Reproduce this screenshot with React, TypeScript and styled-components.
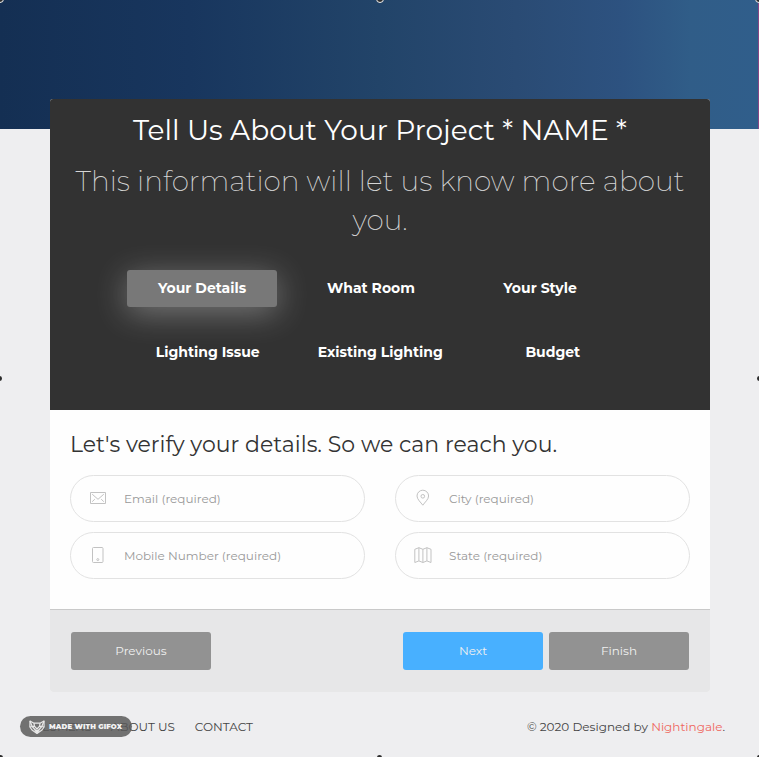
import React from "react";
import styled, { createGlobalStyle } from "styled-components";

const GlobalStyle = createGlobalStyle`
  *, *::before, *::after { box-sizing: border-box; }
  body {
    margin: 0;
    background: #eeeef0;
    font-family: Montserrat, Inter, "Open Sans", sans-serif;
    color: #333;
    overflow: hidden;
  }
`;

const Page = styled.div`
  position: relative;
  height: 757px;
  overflow: hidden;
  padding: 99px 49px 0 50px;
  background:
    linear-gradient(90deg, #142f53 0%, #18365e 25%, #224469 50%, #2a4b74 68%, #2d5280 82%, #305d88 91%, #305e8b 100%)
    0 0 / 100% 129px no-repeat #eeeef0;
`;

const Card = styled.main`
  width: 660px;
  height: 593px;
  display: flex;
  flex-direction: column;
  border-radius: 3px;
  overflow: hidden;
  background: #fefefe;
`;

const Header = styled.header`
  height: 311px;
  padding-top: 14px;
  background: #323232;
  text-align: center;
`;

const Title = styled.h1`
  margin: 0;
  font-size: 28px;
  line-height: 35px;
  font-weight: 400;
  color: #fff;
`;

const Subtitle = styled.p`
  margin: 14px 20px 0;
  font-size: 28px;
  line-height: 39px;
  font-weight: 200;
  color: #d6d6d6;
`;

const StepRow = styled.div<{ $column: number; $start: number; $top: number }>`
  display: grid;
  grid-template-columns: repeat(3, ${(p) => p.$column}px);
  justify-items: center;
  margin: ${(p) => p.$top}px 0 0 ${(p) => p.$start}px;
`;

const Step = styled.button<{ $active?: boolean }>`
  width: 150px;
  height: 37px;
  padding: 0;
  border: 0;
  border-radius: 3px;
  font: 700 14px/37px Montserrat, Inter, sans-serif;
  color: #fff;
  background: ${(p) => (p.$active ? "#787878" : "transparent")};
  box-shadow: ${(p) => (p.$active ? "0 6px 32px rgba(255, 255, 255, 0.34)" : "none")};
`;

const Body = styled.section`
  height: 199px;
  padding: 18px 20px 0;
`;

const FormHeading = styled.h2`
  margin: 0 0 13px;
  font-size: 22px;
  line-height: 34px;
  font-weight: 400;
`;

const Fields = styled.div`
  display: grid;
  grid-template-columns: 295px 295px;
  gap: 10px 30px;
`;

const Field = styled.label`
  display: flex;
  align-items: center;
  gap: 17px;
  height: 47px;
  padding: 0 18px;
  border: 1px solid #e2e2e2;
  border-radius: 24px;
`;

const Input = styled.input`
  flex: 1;
  min-width: 0;
  padding: 0;
  border: 0;
  outline: 0;
  background: transparent;
  font: 400 12px Montserrat, Inter, sans-serif;
  &::placeholder { color: #999; opacity: 1; }
`;

const Icon = styled.svg`
  flex: none;
  width: 18px;
  height: 18px;
  margin-bottom: 2px;
  fill: none;
  stroke: #c2c2c2;
  stroke-width: 1;
`;

const Actions = styled.div`
  flex: 1;
  display: flex;
  align-items: flex-start;
  gap: 6px;
  padding: 22px 21px 0;
  border-top: 1px solid #c9c9c9;
  background: #e7e7e8;
`;

const Button = styled.button<{ $primary?: boolean }>`
  width: 140px;
  height: 38px;
  padding: 0;
  border: 0;
  border-radius: 3px;
  font: 400 12px/38px Montserrat, Inter, sans-serif;
  color: #f0f0f0;
  background: ${(p) => (p.$primary ? "#48b0ff" : "#929292")};
  &:first-child { margin-right: auto; }
`;

const Footer = styled.footer`
  display: flex;
  justify-content: space-between;
  width: 683px;
  margin: 25px 0 0 -8px;
  font-size: 12px;
  line-height: 20px;
  color: #444;
`;

const Links = styled.nav`
  display: flex;
  gap: 20px;
`;

const Link = styled.span<{ $spacing?: number }>`
  letter-spacing: ${(p) => p.$spacing ?? 0}px;
`;

const Brand = styled.span`
  color: #ee675e;
`;

const Badge = styled.div`
  position: absolute;
  left: 20px;
  top: 716px;
  display: flex;
  align-items: center;
  gap: 4px;
  width: 112px;
  height: 21px;
  padding-left: 9px;
  border-radius: 11px;
  background: rgba(88, 88, 88, 0.84);
  color: #f2f2f2;
  font-size: 7px;
  font-weight: 900;
  letter-spacing: 0.12px;
  white-space: nowrap;
`;

const Handle = styled.i<{ $x: number; $y: number; $ring?: boolean }>`
  position: absolute;
  left: ${(p) => p.$x - (p.$ring ? 4 : 2.5)}px;
  top: ${(p) => p.$y - (p.$ring ? 4 : 2.5)}px;
  width: ${(p) => (p.$ring ? 8 : 5)}px;
  height: ${(p) => (p.$ring ? 8 : 5)}px;
  border-radius: 50%;
  border: ${(p) => (p.$ring ? "1.3px solid #f3f3f3" : "0")};
  background: #2b2b2b;
`;

const Edge = styled.i`
  position: absolute;
  right: 0;
  top: 3px;
  width: 1px;
  height: 126px;
  background: #8a4683;
`;

const Envelope = () => (
  <Icon viewBox="0 0 18 18">
    <path d="M1.5 3.5h15v11h-15z" />
    <path d="M3.2 5.2 9 10.3l5.8-5.1M3.2 12.7l2.6-2.5M14.8 12.7l-2.6-2.5" />
  </Icon>
);

const Phone = () => (
  <Icon viewBox="0 0 18 18">
    <rect x="3.5" y="1.5" width="10.5" height="15" rx="1" />
    <circle cx="8.8" cy="13.6" r="1" />
  </Icon>
);

const Pin = () => (
  <Icon viewBox="0 0 18 18">
    <path d="M8.8 16.2C6.8 13.3 3 10.3 3 7a5.8 5.8 0 0 1 11.6 0c0 3.3-3.8 6.3-5.8 9.2z" />
    <circle cx="8.8" cy="7.3" r="1.8" />
  </Icon>
);

const MapIcon = () => (
  <Icon viewBox="0 0 18 18">
    <path d="M.8 3.3 4.9 1.7 8.9 3.3 12.9 1.7 17 3.3v13.2l-4.1-1.6-4 1.6-4-1.6-4.1 1.6zM4.9 1.7v13.2M8.9 3.3v13.2M12.9 1.7v13.2" strokeLinejoin="round" />
  </Icon>
);

const Fox = () => (
  <svg width="16" height="14" viewBox="0 0 16 14" fill="none" stroke="#e8e8e8" strokeWidth="1.2" strokeLinejoin="round">
    <path d="M1 1l4 2.2h6L15 1l.1 6L13 10l-5 3.4L3 10 .9 7z" />
    <path d="M1 1l2.2 5.5L8 12l4.8-5.5L15 1M.9 7l4.5-.8L5 3.2M15.1 7l-4.5-.8.4-3M5.4 6.2 8 9l2.6-2.8" />
    <path d="M6.2 10.4h3.6L8 13z" fill="#f2f2f2" />
  </svg>
);

export default function App() {
  return (
    <>
      <GlobalStyle />
      <Page>
        <Card>
          <Header>
            <Title>Tell Us About Your Project * NAME *</Title>
            <Subtitle>This information will let us know more about you.</Subtitle>
            <StepRow $column={169} $start={67.5} $top={30}>
              <Step $active>Your Details</Step>
              <Step>What Room</Step>
              <Step>Your Style</Step>
            </StepRow>
            <StepRow $column={172.5} $start={71.5} $top={27}>
              <Step>Lighting Issue</Step>
              <Step>Existing Lighting</Step>
              <Step>Budget</Step>
            </StepRow>
          </Header>
          <Body>
            <FormHeading>Let's verify your details. So we can reach you.</FormHeading>
            <Fields>
              <Field><Envelope /><Input placeholder="Email (required)" /></Field>
              <Field><Pin /><Input placeholder="City (required)" /></Field>
              <Field><Phone /><Input placeholder="Mobile Number (required)" /></Field>
              <Field><MapIcon /><Input placeholder="State (required)" /></Field>
            </Fields>
          </Body>
          <Actions>
            <Button>Previous</Button>
            <Button $primary>Next</Button>
            <Button>Finish</Button>
          </Actions>
        </Card>
        <Footer>
          <Links>
            <Link $spacing={-0.7}>LUMENS</Link>
            <Link>ABOUT US</Link>
            <Link>CONTACT</Link>
          </Links>
          <div>© 2020 Designed by <Brand>Nightingale</Brand>.</div>
        </Footer>
        <Badge><Fox />MADE WITH GIFOX</Badge>
        <Edge />
        <Handle $x={0} $y={-1} $ring />
        <Handle $x={379.5} $y={-1} $ring />
        <Handle $x={759} $y={-1} $ring />
        <Handle $x={-0.5} $y={378.5} />
        <Handle $x={759.5} $y={378.5} />
        <Handle $x={0} $y={757.5} />
        <Handle $x={379.5} $y={757.5} />
        <Handle $x={759} $y={757.5} />
      </Page>
    </>
  );
}
